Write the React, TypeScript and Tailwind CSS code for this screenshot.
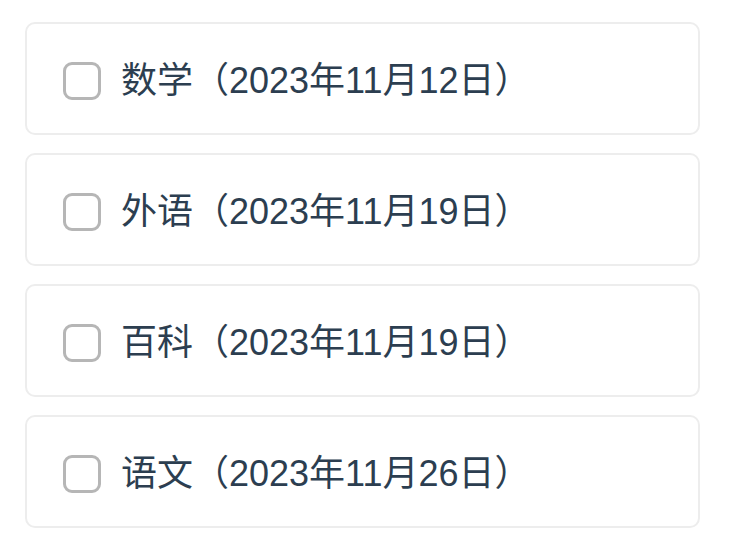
import React from "react";

interface Course {
  name: string;
  date: string;
}

const courses: Course[] = [
  { name: "数学", date: "2023年11月12日" },
  { name: "外语", date: "2023年11月19日" },
  { name: "百科", date: "2023年11月19日" },
  { name: "语文", date: "2023年11月26日" },
];

const App: React.FC = () => {
  return (
    <div
      className="min-h-screen bg-white pl-[25px] pr-[35px] pt-[22px]"
      style={{ fontFamily: '"Liberation Sans", "Noto Sans CJK SC", sans-serif' }}
    >
      <div className="flex flex-col gap-[18px]">
        {courses.map((c) => (
          <label
            key={c.name + c.date}
            className="flex h-[113px] items-center gap-[20px] rounded-[10px] border-2 border-[#ededed] bg-white pl-[36px] pt-[4px]"
          >
            <input type="checkbox" className="peer sr-only" />
            <span className="h-[38px] w-[38px] shrink-0 rounded-[9px] border-[3px] border-[#b6b6b6] bg-white" />
            <span className="text-[36px] leading-none text-[#2c3e50]">
              {c.name}（{c.date}）
            </span>
          </label>
        ))}
      </div>
    </div>
  );
};

export default App;
